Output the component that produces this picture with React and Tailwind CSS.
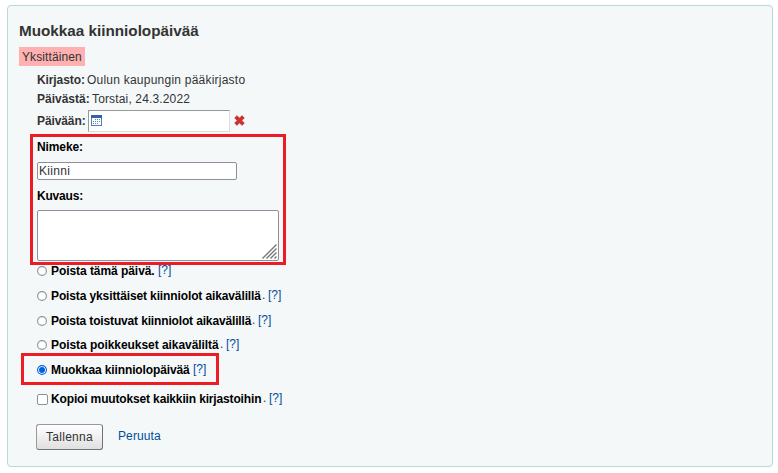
const CalendarIcon = () => (
  <svg width="11" height="11" viewBox="0 0 11 11" shapeRendering="crispEdges">
    <rect width="11" height="11" fill="#4c82b8" />
    <rect width="11" height="3" fill="#2f659f" />
    <rect x="1" y="3" width="9" height="7" fill="#fff" />
    <path
      d="M4 4h1v1h-1zM6 4h1v1h-1zM8 4h1v1h-1zM2 6h1v1h-1zM4 6h1v1h-1zM6 6h1v1h-1zM8 6h1v1h-1zM2 8h1v1h-1zM4 8h1v1h-1zM6 8h1v1h-1z"
      fill="#5d7fae"
    />
  </svg>
);

const ClearIcon = () => (
  <svg width="11" height="11" viewBox="0 0 11 11">
    <path d="M2.9 .3 5.5 2.8 8.1 .3 10.7 2.9 8.1 5.5 10.7 8.1 8.1 10.7 5.5 8.2 2.9 10.7 .3 8.1 2.9 5.5 .3 2.9z" fill="#cc3333" />
  </svg>
);

const ResizeGrip = () => (
  <svg width="15" height="15" viewBox="0 0 15 15" fill="none" stroke="#777" strokeWidth="1.4">
    <path d="M.5 14.5 14.5.5M4.5 14.5 14.5 4.5M8.5 14.5 14.5 8.5M12.5 14.5 14.5 12.5" />
  </svg>
);

const Radio = ({ checked }) => (
  <svg width="10" height="10" viewBox="0 0 10 10" className="shrink-0">
    <circle cx="5" cy="5" r="4.4" fill="#fff" stroke={checked ? "#0060df" : "#8f8f9d"} strokeWidth="1.1" />
    {checked && <circle cx="5" cy="5" r="3" fill="#0060df" />}
  </svg>
);

const Label = ({ text, dot, width, tracking = "tracking-[-0.15px]" }) => (
  <div className="flex whitespace-nowrap pl-1">
    <span className={`shrink-0 font-bold text-black ${width} ${tracking}`}>{text}</span>
    {dot && <span className="-mt-px w-[6px]">.</span>}
    <a className="-mt-px text-[#004d99]">[?]</a>
  </div>
);

const Option = ({ checked, ...label }) => (
  <div className="flex items-center">
    <Radio checked={checked} />
    <Label {...label} />
  </div>
);

export default function App() {
  return (
    <main className="h-[473px] w-[778px] overflow-hidden bg-white pl-[7px] pt-[5px] font-['Liberation_Sans',Arial,sans-serif] text-[12px] leading-[18px] text-[#333]">
      <section className="relative flex h-[462px] w-[766px] flex-col items-start rounded-[4px] border border-[#b9d8d9] bg-[#f4f8f9] pl-[11px] pt-4">
        <h1 className="text-[15.25px] font-bold leading-[18px]">Muokkaa kiinniolopäivää</h1>
        <div className="mt-[7px] flex h-[19px] w-[66px] items-center bg-[#ffb0b0] pl-[3px] tracking-[0.1px]">Yksittäinen</div>
        <form className="flex flex-col items-start pl-[18px] pt-1">
          <div className="flex h-[19px] items-center"><b className="w-[50px] tracking-[-0.1px]">Kirjasto:</b><span className="tracking-[0.23px]">Oulun kaupungin pääkirjasto</span></div>
          <div className="flex h-[19px] items-center"><b className="w-[55px]">Päivästä:</b><span className="tracking-[0.15px]">Torstai, 24.3.2022</span></div>
          <div className="mt-[2px] flex h-[22px] items-center">
            <b className="w-[51px] tracking-[-0.1px]">Päivään:</b>
            <div className="flex h-[22px] w-[142px] items-start border border-b-[#ddd] border-l-[#999] border-r-[#ddd] border-t-[#999] bg-white pl-[2px] pt-1"><CalendarIcon /></div>
            <span className="ml-1 pb-[2px]"><ClearIcon /></span>
          </div>
          <b className="mt-[6px] tracking-[-0.1px] text-black">Nimeke:</b>
          <div className="mt-[6px] flex h-[18px] w-[200px] items-center rounded-[2px] border border-[#8f8f9d] bg-white pl-px tracking-[0.3px]">Kiinni</div>
          <b className="mt-[7px] tracking-[-0.2px] text-black">Kuvaus:</b>
          <div className="mt-[5px] flex h-[51px] w-[242px] items-end justify-end rounded-[2px] border border-[#8f8f9d] bg-white p-px"><ResizeGrip /></div>
          <div className="mt-px flex flex-col gap-[6.8px]">
            <Option text="Poista tämä päivä." width="w-[107px]" tracking="tracking-[-0.06px]" />
            <Option text="Poista yksittäiset kiinniolot aikavälillä" dot width="w-[211px]" tracking="tracking-[-0.12px]" />
            <Option text="Poista toistuvat kiinniolot aikavälillä" dot width="w-[201px]" />
            <Option text="Poista poikkeukset aikaväliltä" dot width="w-[169px]" tracking="tracking-[-0.06px]" />
            <Option text="Muokkaa kiinniolopäivää" checked width="w-[142px]" tracking="tracking-[-0.12px]" />
          </div>
          <div className="mt-[11px] flex items-center">
            <span className="h-[11px] w-[11px] shrink-0 rounded-[2px] border border-[#8f8f9d] bg-white" />
            <div className="-ml-px"><Label text="Kopioi muutokset kaikkiin kirjastoihin" dot width="w-[212px]" /></div>
          </div>
          <div className="-ml-px mt-4 flex items-center">
            <button type="button" className="h-[26px] w-[67px] rounded-[3px] border border-b-[#727272] border-l-[#999] border-r-[#727272] border-t-[#999] bg-gradient-to-b from-white to-[#e0e0e0] tracking-[0.3px]">Tallenna</button>
            <a className="-mt-[2px] ml-[15px] tracking-[0.1px] text-[#004d99]">Peruuta</a>
          </div>
        </form>
        <div className="absolute left-[22px] top-[128px] h-[131px] w-[256px] border-[3px] border-[#ed1c24]" />
        <div className="absolute left-[13px] top-[347px] h-[32px] w-[198px] border-[3px] border-[#ed1c24]" />
      </section>
    </main>
  );
}
